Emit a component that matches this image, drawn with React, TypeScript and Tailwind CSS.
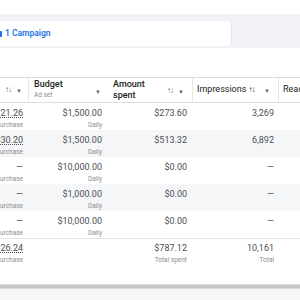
import React from 'react';

type Row = {
  cpr: string;
  budget: string;
  spent: string;
  imp: string;
  shaded: boolean;
  link: boolean;
};

const rows: Row[] = [
  { cpr: '$21.26', budget: '$1,500.00', spent: '$273.60', imp: '3,269', shaded: false, link: true },
  { cpr: '$30.20', budget: '$1,500.00', spent: '$513.32', imp: '6,892', shaded: true, link: true },
  { cpr: '—', budget: '$10,000.00', spent: '$0.00', imp: '—', shaded: false, link: false },
  { cpr: '—', budget: '$1,000.00', spent: '$0.00', imp: '—', shaded: true, link: false },
  { cpr: '—', budget: '$10,000.00', spent: '$0.00', imp: '—', shaded: false, link: false },
];

const SortIcon = () => (
  <span className="flex items-center gap-[5px] text-[#606770]">
    <span className="text-[8px] tracking-[-1px]">↑↓</span>
    <span className="text-[6px]">▼</span>
  </span>
);

export default function App() {
  return (
    <div
      className="w-[300px] h-[300px] overflow-hidden bg-white flex flex-col"
      style={{ fontFamily: 'Roboto, "Liberation Sans", sans-serif' }}
    >
      <div className="h-[14px] shrink-0" />

      {/* Tab band */}
      <div className="h-[34px] shrink-0 bg-[#f0f2f5] pt-[7px]">
        <div className="w-[236px] -ml-[4px] h-[25px] bg-white rounded-r-[3px] border-r border-[#e4e6eb] flex items-center pl-[4px]">
          <span className="w-[6px] h-[6px] -ml-[4px] mr-[3px] rounded-[1px] bg-[#1b74e4]" />
          <span className="text-[8.5px] font-semibold text-[#1b74e4]">1 Campaign</span>
        </div>
      </div>

      <div className="h-[29px] shrink-0" />

      {/* Header */}
      <div className="h-[26px] shrink-0 flex border-y border-[#dadde1] text-[#1c1e21]">
        <div className="w-[29px] shrink-0 flex items-center justify-end pr-[6px] border-r border-[#e4e6eb]">
          <SortIcon />
        </div>
        <div className="w-[81px] shrink-0 flex items-start justify-between pl-[5px] pr-[9px] pt-[2px]">
          <div className="flex flex-col leading-none">
            <span className="text-[9px] font-medium">Budget</span>
            <span className="text-[6.5px] text-[#8a8d91] mt-[3px]">Ad set</span>
          </div>
          <span className="text-[6px] text-[#606770] mt-[7px]">▼</span>
        </div>
        <div className="w-[83px] shrink-0 flex items-start justify-between pl-[3px] pr-[8px] pt-[1px] border-r border-[#e4e6eb]">
          <div className="flex flex-col text-[9px] font-medium leading-[11px]">
            <span>Amount</span>
            <span>spent</span>
          </div>
          <span className="mt-[6px]">
            <SortIcon />
          </span>
        </div>
        <div className="w-[86px] shrink-0 flex items-center justify-between pl-[4px] pr-[8px] border-r border-[#e4e6eb]">
          <span className="text-[9px] whitespace-nowrap">
            Impressions <span className="text-[8px] tracking-[-1px]">↑↓</span>
          </span>
          <span className="text-[6px] text-[#606770]">▼</span>
        </div>
        <div className="w-[60px] shrink-0 flex items-center pl-[4px]">
          <span className="text-[9px]">Reach</span>
        </div>
      </div>

      {/* Rows */}
      {rows.map((r, i) => (
        <div
          key={i}
          className={`h-[27px] shrink-0 flex text-[#4b4f56] ${r.shaded ? 'bg-[#f5f6f7]' : 'bg-white'}`}
        >
          <div className="w-[29px] shrink-0 flex flex-col items-end pt-[6px] pr-[6px] leading-none">
            <span className={`text-[9px] whitespace-nowrap ${r.link ? 'underline decoration-dotted' : ''}`}>{r.cpr}</span>
            <span className="text-[6.5px] text-[#8a8d91] mt-[4px] whitespace-nowrap">Per purchase</span>
          </div>
          <div className="w-[81px] shrink-0 flex flex-col items-end pt-[6px] pr-[8px] leading-none">
            <span className="text-[9px]">{r.budget}</span>
            <span className="text-[6.5px] text-[#8a8d91] mt-[4px]">Daily</span>
          </div>
          <div className="w-[83px] shrink-0 flex items-start justify-end pr-[6px] pt-[6px] leading-none">
            <span className="text-[9px]">{r.spent}</span>
          </div>
          <div className="w-[86px] shrink-0 flex items-start justify-end pr-[5px] pt-[6px] leading-none">
            <span className="text-[9px]">{r.imp}</span>
          </div>
        </div>
      ))}

      {/* Totals */}
      <div className="h-[29px] shrink-0 flex border-t border-[#e4e6eb] text-[#4b4f56]">
        <div className="w-[29px] shrink-0 flex flex-col items-end pt-[5px] pr-[6px] leading-none">
          <span className="text-[9px] underline decoration-dotted whitespace-nowrap">$26.24</span>
          <span className="text-[6.5px] text-[#8a8d91] mt-[4px] whitespace-nowrap">Per purchase</span>
        </div>
        <div className="w-[81px] shrink-0" />
        <div className="w-[83px] shrink-0 flex flex-col items-end pt-[5px] pr-[6px] leading-none">
          <span className="text-[9px]">$787.12</span>
          <span className="text-[6.5px] text-[#8a8d91] mt-[4px]">Total spent</span>
        </div>
        <div className="w-[86px] shrink-0 flex flex-col items-end pt-[5px] pr-[5px] leading-none">
          <span className="text-[9px]">10,161</span>
          <span className="text-[6.5px] text-[#8a8d91] mt-[4px]">Total</span>
        </div>
      </div>

      <div className="h-[17px] shrink-0" />

      {/* Horizontal scrollbar */}
      <div className="h-[5px] shrink-0 bg-[#c6c6c6] border-y border-[#dcdcdc]" />
      <div className="flex-1 bg-[#f7f7f7]" />
    </div>
  );
}
